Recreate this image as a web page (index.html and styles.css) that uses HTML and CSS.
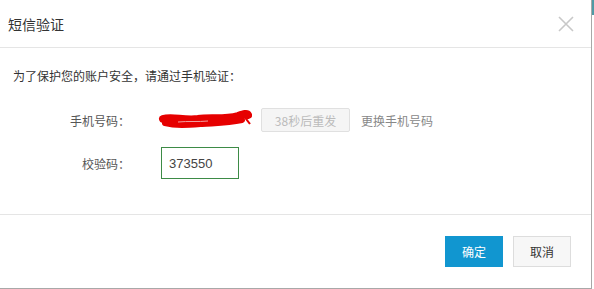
FILE: index.html
```html
<!DOCTYPE html>
<html lang="zh-CN">
<head>
    <meta charset="UTF-8">
    <title>短信验证</title>
    <link rel="stylesheet" href="styles.css">
</head>
<body>
    <div class="dialog">
        <div class="dialog-header">
            <span class="dialog-title">短信验证</span>
            <svg class="close" width="16" height="16" viewBox="0 0 16 16">
                <path d="M1 1 L15 15 M15 1 L1 15" stroke="#c8c8c8" stroke-width="1.6" fill="none"/>
            </svg>
        </div>
        <div class="dialog-body">
            <p class="tip">为了保护您的账户安全，请通过手机验证：</p>
            <div class="form-row">
                <label class="form-label">手机号码：</label>
                <div class="form-value">
                    <svg class="scribble" width="94" height="22" viewBox="0 0 94 22">
                        <path d="M5 10 C14 7 26 12 40 10 C52 8 66 11 80 7 C86 5 89 4 90 6" stroke="#e60000" stroke-width="8" fill="none" stroke-linecap="round"/>
                        <path d="M7 14 C18 17 30 16 44 15 C58 14 70 14 84 11" stroke="#e60000" stroke-width="6" fill="none" stroke-linecap="round"/>
                        <path d="M20 13 C30 12 40 13 50 12" stroke="#f2a0a0" stroke-width="1" fill="none"/>
                        <path d="M84 6 C88 9 90 12 92 15" stroke="#e60000" stroke-width="2" fill="none"/>
                    </svg>
                    <button class="btn-resend" disabled>38秒后重发</button>
                    <a class="link">更换手机号码</a>
                </div>
            </div>
            <div class="form-row">
                <label class="form-label">校验码：</label>
                <div class="form-value">
                    <input class="code-input" type="text" value="373550">
                </div>
            </div>
        </div>
        <div class="dialog-footer">
            <button class="btn btn-primary">确定</button>
            <button class="btn btn-default">取消</button>
        </div>
    </div>
    <div class="edge"></div>
</body>
</html>
```

FILE: styles.css
```css
body {
    margin: 0;
    font-family: "Noto Sans CJK SC", "Liberation Sans", sans-serif;
    background: #fff;
    color: #333;
}
.dialog {
    width: 591px;
    height: 288px;
    border-right: 1px solid #a8a8a8;
    border-bottom: 1px solid #a8a8a8;
    display: flex;
    flex-direction: column;
    background: #fff;
}
.edge {
    position: absolute;
    left: 592px;
    top: 0;
    width: 2px;
    height: 15px;
    background: #4f9aa5;
}
.dialog-header {
    height: 47px;
    border-bottom: 1px solid #e5e5e5;
    display: flex;
    align-items: center;
    justify-content: space-between;
    padding: 0 17px 0 8px;
}
.dialog-title {
    font-size: 14px;
    color: #333;
}
.close {
    display: block;
}
.dialog-body {
    height: 167px;
    padding: 19px 0 0 13px;
    box-sizing: border-box;
    border-bottom: 1px solid #e5e5e5;
}
.tip {
    margin: 0 0 23px;
    font-size: 12px;
    line-height: 18px;
}
.form-row {
    display: flex;
    align-items: center;
    margin-bottom: 15px;
    font-size: 12px;
}
.form-label {
    width: 117px;
    text-align: right;
    color: #555;
}
.form-value {
    display: flex;
    align-items: center;
    margin-left: 28px;
}
.scribble {
    display: block;
    margin-right: 9px;
}
.btn-resend {
    width: 89px;
    height: 24px;
    background: #f5f5f5;
    border: 1px solid #e0e0e0;
    color: #bbb;
    font-family: inherit;
    font-size: 12px;
    padding: 0;
    border-radius: 2px;
}
.link {
    margin-left: 11px;
    color: #888;
}
.code-input {
    width: 78px;
    height: 32px;
    box-sizing: border-box;
    margin-left: 3px;
    border: 1px solid #3d8b46;
    padding: 0 7px;
    font-family: "Liberation Sans", sans-serif;
    font-size: 13px;
    color: #444;
    outline: none;
}
.dialog-footer {
    display: flex;
    justify-content: flex-end;
    gap: 10px;
    padding: 21px 20px 0 0;
}
.btn {
    width: 58px;
    height: 31px;
    font-family: inherit;
    font-size: 12px;
    padding: 0;
    border-radius: 0;
}
.btn-primary {
    background: #1196d0;
    border: 1px solid #1196d0;
    color: #fff;
}
.btn-default {
    background: #f7f7f7;
    border: 1px solid #ddd;
    color: #333;
}
```
